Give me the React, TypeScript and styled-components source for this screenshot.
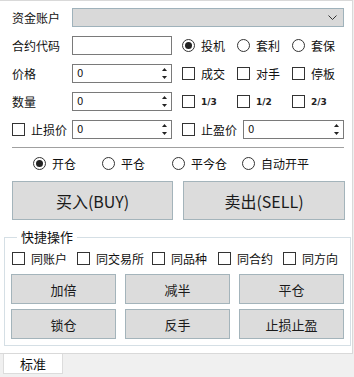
import React from 'react';
import styled, { createGlobalStyle } from 'styled-components';

const GlobalStyle = createGlobalStyle`
  body {
    margin: 0;
    background: #f0f0f0;
    font-family: "Noto Sans CJK SC", "Noto Sans", sans-serif;
    font-size: 12px;
    color: #111;
  }
`;

const Window = styled.div`
  width: 354px;
  height: 377px;
  display: flex;
  flex-direction: column;
  background: #f0f0f0;
  overflow: hidden;
`;

const Panel = styled.div`
  box-sizing: border-box;
  width: 353px;
  height: 354px;
  background: #fff;
  border-top: 1px solid #d9d9d9;
  border-right: 1px solid #d9d9d9;
  border-bottom: 1px solid #d9d9d9;
  padding: 6px 0 0 12px;
  display: flex;
  flex-direction: column;
`;

const Row = styled.div<{ $mt?: number }>`
  display: flex;
  align-items: center;
  height: 19px;
  margin-top: ${p => p.$mt ?? 9}px;
`;

const Label = styled.div`
  width: 60px;
  line-height: 19px;
  white-space: nowrap;
`;

const Combo = styled.div`
  box-sizing: border-box;
  width: 272px;
  height: 19px;
  background: #d9d9d9;
  border: 1px solid #9fb2bb;
  display: flex;
  align-items: center;
  justify-content: flex-end;
  padding-right: 6px;
`;

const TextBox = styled.div<{ $w?: number }>`
  box-sizing: border-box;
  width: ${p => p.$w ?? 100}px;
  height: 19px;
  border: 1px solid #7a7a7a;
  background: #fff;
  display: flex;
  align-items: center;
  padding-left: 4px;
  font-family: "DejaVu Sans", sans-serif;
  font-size: 10px;
`;

const SpinValue = styled.span`
  flex: 1;
`;

const SpinArrows = styled.svg`
  margin-right: 4px;
`;

const Options = styled.div`
  display: flex;
  margin-left: 10px;
`;

const Option = styled.label<{ $w?: number }>`
  display: flex;
  align-items: center;
  width: ${p => (p.$w ? `${p.$w}px` : 'auto')};
  white-space: nowrap;
  gap: 6px;
`;

const Box = styled.span`
  box-sizing: border-box;
  width: 13px;
  height: 13px;
  border: 1px solid #333;
  background: #fff;
  flex-shrink: 0;
`;

const Circle = styled.span<{ $on?: boolean }>`
  box-sizing: border-box;
  width: 13px;
  height: 13px;
  border: 1px solid #333;
  border-radius: 50%;
  background: #fff;
  flex-shrink: 0;
  display: flex;
  align-items: center;
  justify-content: center;
  &::after {
    content: '';
    display: ${p => (p.$on ? 'block' : 'none')};
    width: 7px;
    height: 7px;
    border-radius: 50%;
    background: #222;
  }
`;

const Small = styled.span`
  font-family: "DejaVu Sans", sans-serif;
  font-size: 9px;
  font-weight: bold;
  color: #222;
`;

const Separator = styled.div`
  width: 332px;
  height: 1px;
  background: #a0a0a0;
  margin-top: 8px;
`;

const OpenRow = styled.div`
  display: flex;
  align-items: center;
  height: 14px;
  margin-top: 8px;
  padding-left: 21px;
`;

const BigButtons = styled.div`
  display: flex;
  gap: 10px;
  margin-top: 11px;
`;

const Button = styled.div<{ $w: number; $h: number; $size?: number }>`
  box-sizing: border-box;
  width: ${p => p.$w}px;
  height: ${p => p.$h}px;
  background: #dcdcdc;
  border: 1px solid #a4b4bb;
  display: flex;
  align-items: center;
  justify-content: center;
  font-size: ${p => p.$size ?? 13}px;
  color: #1a1a1a;
`;

const Group = styled.div`
  position: relative;
  box-sizing: border-box;
  width: 347px;
  height: 109px;
  margin: 17px 0 0 -8px;
  border: 1px solid #d5dfe5;
  padding: 13px 0 0 7px;
  display: flex;
  flex-direction: column;
`;

const GroupTitle = styled.div`
  position: absolute;
  top: -9px;
  left: 12px;
  padding: 0 4px;
  background: #fff;
  font-size: 13px;
  line-height: 16px;
`;

const GroupChecks = styled.div`
  display: flex;
  align-items: center;
  height: 14px;
`;

const QuickGrid = styled.div`
  display: grid;
  grid-template-columns: repeat(3, 105px);
  grid-auto-rows: 30px;
  column-gap: 9px;
  row-gap: 5px;
  margin-top: 9px;
  margin-left: -1px;
`;

const TabStrip = styled.div`
  flex: 1;
  display: flex;
  align-items: flex-start;
  padding-left: 3px;
`;

const Tab = styled.div`
  box-sizing: border-box;
  width: 60px;
  height: 20px;
  background: #fff;
  border: 1px solid #dcdcdc;
  border-top: none;
  display: flex;
  align-items: center;
  justify-content: center;
  font-size: 13px;
`;

function Spin({ w }: { w?: number }) {
  return (
    <TextBox $w={w}>
      <SpinValue>0</SpinValue>
      <SpinArrows width="5" height="11" viewBox="0 0 5 11">
        <polygon points="2.5,0 5,3 0,3" fill="#222" />
        <polygon points="0,8 5,8 2.5,11" fill="#222" />
      </SpinArrows>
    </TextBox>
  );
}

function Radio({ on, children, w = 55 }: { on?: boolean; children: React.ReactNode; w?: number }) {
  return (
    <Option $w={w}>
      <Circle $on={on} />
      {children}
    </Option>
  );
}

function Check({ children, w = 55 }: { children: React.ReactNode; w?: number }) {
  return (
    <Option $w={w}>
      <Box />
      {children}
    </Option>
  );
}

const sameOptions = [
  { text: '同账户', w: 65 },
  { text: '同交易所', w: 75 },
  { text: '同品种', w: 66 },
  { text: '同合约', w: 65 },
  { text: '同方向', w: 60 },
];

const quickActions = ['加倍', '减半', '平仓', '锁仓', '反手', '止损止盈'];

export default function App() {
  return (
    <Window>
      <GlobalStyle />
      <Panel>
        <Row $mt={1}>
          <Label>资金账户</Label>
          <Combo>
            <svg width="9" height="5" viewBox="0 0 9 5">
              <polyline points="0.5,0.5 4.5,4.5 8.5,0.5" fill="none" stroke="#333" strokeWidth="1" />
            </svg>
          </Combo>
        </Row>
        <Row>
          <Label>合约代码</Label>
          <TextBox />
          <Options>
            <Radio on>投机</Radio>
            <Radio>套利</Radio>
            <Radio>套保</Radio>
          </Options>
        </Row>
        <Row>
          <Label>价格</Label>
          <Spin />
          <Options>
            <Check>成交</Check>
            <Check>对手</Check>
            <Check>停板</Check>
          </Options>
        </Row>
        <Row>
          <Label>数量</Label>
          <Spin />
          <Options>
            <Check><Small>1/3</Small></Check>
            <Check><Small>1/2</Small></Check>
            <Check><Small>2/3</Small></Check>
          </Options>
        </Row>
        <Row>
          <Check w={60}>止损价</Check>
          <Spin />
          <Options>
            <Check w={61}>止盈价</Check>
            <Spin w={101} />
          </Options>
        </Row>
        <Separator />
        <OpenRow>
          <Radio on w={69}>开仓</Radio>
          <Radio w={70}>平仓</Radio>
          <Radio w={70}>平今仓</Radio>
          <Radio w={80}>自动开平</Radio>
        </OpenRow>
        <BigButtons>
          <Button $w={161} $h={39} $size={16}>买入(BUY)</Button>
          <Button $w={162} $h={39} $size={16}>卖出(SELL)</Button>
        </BigButtons>
        <Group>
          <GroupTitle>快捷操作</GroupTitle>
          <GroupChecks>
            {sameOptions.map(o => (
              <Check key={o.text} w={o.w}>{o.text}</Check>
            ))}
          </GroupChecks>
          <QuickGrid>
            {quickActions.map(a => (
              <Button key={a} $w={105} $h={30}>{a}</Button>
            ))}
          </QuickGrid>
        </Group>
      </Panel>
      <TabStrip>
        <Tab>标准</Tab>
      </TabStrip>
    </Window>
  );
}
